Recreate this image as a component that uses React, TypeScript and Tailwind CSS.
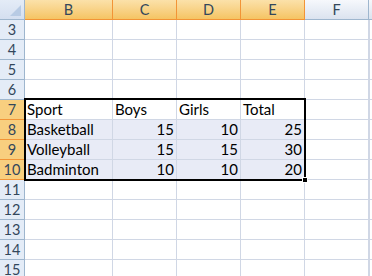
import React from "react";

const cols = [
  { name: "B", w: 88, sel: true },
  { name: "C", w: 64, sel: true },
  { name: "D", w: 64, sel: true },
  { name: "E", w: 64, sel: true },
  { name: "F", w: 64, sel: false },
];

const data: Record<number, (string | number)[]> = {
  7: ["Sport", "Boys", "Girls", "Total"],
  8: ["Basketball", 15, 10, 25],
  9: ["Volleyball", 15, 15, 30],
  10: ["Badminton", 10, 10, 20],
};

const rows = [3, 4, 5, 6, 7, 8, 9, 10, 11, 12, 13, 14, 15];

export default function App() {
  return (
    <div
      className="relative w-[372px] h-[276px] overflow-hidden bg-white"
      style={{ fontFamily: "Lato, 'Open Sans', sans-serif" }}
    >
      {/* header row */}
      <div className="flex h-[20px]">
        <div className="w-[25px] shrink-0 border-r border-b border-[#9eb6ce] bg-gradient-to-b from-[#e4ecf7] to-[#d4dff0] relative">
          <div className="absolute right-[3px] bottom-[3px] w-0 h-0 border-l-[11px] border-l-transparent border-b-[11px] border-b-[#b8cbe4]" />
        </div>
        {cols.map((c) => (
          <div
            key={c.name}
            className={`shrink-0 flex items-center justify-center border-r border-b text-[14.5px] text-[#33475b] ${
              c.sel
                ? "bg-gradient-to-b from-[#fbe1a9] to-[#f5c462] border-[#f29436]"
                : "bg-gradient-to-b from-[#f6f8fc] to-[#dbe3ef] border-[#9eb6ce]"
            }`}
            style={{ width: c.w }}
          >
            {c.name}
          </div>
        ))}
        <div className="flex-1 border-b border-[#9eb6ce] bg-gradient-to-b from-[#f6f8fc] to-[#dbe3ef]" />
      </div>
      {rows.map((r) => {
        const sel = r >= 7 && r <= 10;
        const vals = data[r];
        return (
          <div key={r} className="flex h-[20px]">
            <div
              className={`w-[25px] shrink-0 flex items-center justify-center border-r border-b text-[14.5px] text-[#33475b] ${
                sel
                  ? "bg-[#f8cf7f] border-[#f29436]"
                  : "bg-[#e4ecf7] border-[#9eb6ce]"
              }`}
            >
              {r}
            </div>
            {cols.map((c, i) => {
              const v = vals && i < 4 ? vals[i] : undefined;
              const highlighted = sel && c.sel && r !== 7;
              const isNum = typeof v === "number";
              return (
                <div
                  key={c.name}
                  className={`shrink-0 flex items-end pb-[1px] px-[2px] border-r border-b border-[#d0d7e5] text-[15px] leading-[18px] text-black ${
                    highlighted ? "bg-[#e8ebf6]" : "bg-white"
                  } ${isNum ? "justify-end" : "justify-start"}`}
                  style={{ width: c.w }}
                >
                  {v}
                </div>
              );
            })}
            <div className="flex-1 border-b border-[#d0d7e5] border-l border-l-[#d0d7e5]" />
          </div>
        );
      })}
      {/* selection border */}
      <div className="absolute left-[24px] top-[98px] w-[282px] h-[83px] border-[2px] border-black pointer-events-none" />
      {/* fill handle */}
      <div className="absolute left-[302px] top-[177px] w-[6px] h-[6px] bg-black border border-white" />
    </div>
  );
}
